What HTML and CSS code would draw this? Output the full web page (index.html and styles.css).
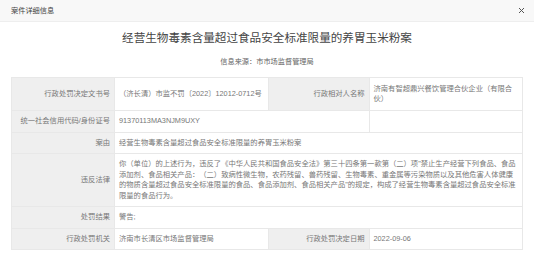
FILE: index.html
```html
<!DOCTYPE html>
<html lang="zh-CN">
<head>
    <meta charset="UTF-8">
    <title>案件详细信息</title>
    <link rel="stylesheet" href="styles.css">
</head>
<body>
    <div class="dialog">
        <div class="dialog-head">
            <span class="dialog-title">案件详细信息</span>
            <span class="close">
                <svg width="7" height="7" viewBox="0 0 7 7"><path d="M1 1 L6 6 M6 1 L1 6" stroke="#555" stroke-width="1"/></svg>
            </span>
        </div>

        <div class="dialog-body">
            <h1 class="case-title">经营生物毒素含量超过食品安全标准限量的养胃玉米粉案</h1>
            <p class="case-source">信息来源：市市场监督管理局</p>

            <table class="case-table">
                <colgroup>
                    <col class="col-label">
                    <col class="col-value">
                    <col class="col-label2">
                    <col class="col-value">
                </colgroup>
                <tr class="row-tall">
                    <th>行政处罚决定文书号</th>
                    <td>（济长清）市监不罚〔2022〕12012-0712号</td>
                    <th>行政相对人名称</th>
                    <td>济南有智超鼎兴餐饮管理合伙企业（有限合伙）</td>
                </tr>
                <tr>
                    <th>统一社会信用代码/身份证号</th>
                    <td colspan="2">91370113MA3NJM9UXY</td>
                    <td></td>
                </tr>
                <tr>
                    <th>案由</th>
                    <td colspan="3">经营生物毒素含量超过食品安全标准限量的养胃玉米粉案</td>
                </tr>
                <tr>
                    <th>违反法律</th>
                    <td colspan="3" class="long-text">你（单位）的上述行为，违反了《中华人民共和国食品安全法》第三十四条第一款第（二）项"禁止生产经营下列食品、食品添加剂、食品相关产品：（二）致病性微生物，农药残留、兽药残留、生物毒素、重金属等污染物质以及其他危害人体健康的物质含量超过食品安全标准限量的食品、食品添加剂、食品相关产品"的规定，构成了经营生物毒素含量超过食品安全标准限量的食品行为。</td>
                </tr>
                <tr>
                    <th>处罚结果</th>
                    <td colspan="3">警告;</td>
                </tr>
                <tr>
                    <th>行政处罚机关</th>
                    <td>济南市长清区市场监督管理局</td>
                    <th>行政处罚决定日期</th>
                    <td>2022-09-06</td>
                </tr>
            </table>
        </div>
    </div>
</body>
</html>
```

FILE: styles.css
```css
body {
    margin: 0;
    padding: 0;
    background-color: #fff;
    font-family: 'Liberation Sans', 'Noto Sans CJK SC', sans-serif;
    color: #666;
}
.dialog-head {
    height: 21px;
    background-color: #f8f8f8;
    border-bottom: 1px solid #eee;
    display: flex;
    align-items: center;
    justify-content: space-between;
    padding: 0 11px;
}
.dialog-title {
    font-size: 7.2px;
    color: #444;
    line-height: 10px;
}
.close {
    display: flex;
    margin-right: -2px;
}
.dialog-body {
    padding: 0 11px;
}
.case-title {
    margin: 8px 0 0;
    font-size: 11.6px;
    font-weight: normal;
    line-height: 16px;
    text-align: center;
    color: #444;
}
.case-source {
    margin: 11px 0 0;
    font-size: 7.2px;
    line-height: 10px;
    text-align: center;
    color: #666;
}
.case-table {
    width: 100%;
    margin-top: 10px;
    border-collapse: collapse;
    table-layout: fixed;
    font-size: 7.3px;
    line-height: 10.5px;
}
.col-label {
    width: 103px;
}
.col-label2 {
    width: 101px;
}
.case-table th,
.case-table td {
    border: 1px solid #e8e8e8;
    padding: 5px 4px 5px 4px;
    vertical-align: middle;
}
.case-table th {
    background-color: #efefef;
    font-weight: normal;
    text-align: right;
    color: #777;
    white-space: nowrap;
}
.case-table td {
    text-align: left;
    color: #777;
}
.case-table .long-text {
    padding-right: 5px;
    text-spacing-trim: space-all;
}
.row-tall td,
.row-tall th {
    padding-top: 5.5px;
    padding-bottom: 5.5px;
}
```
